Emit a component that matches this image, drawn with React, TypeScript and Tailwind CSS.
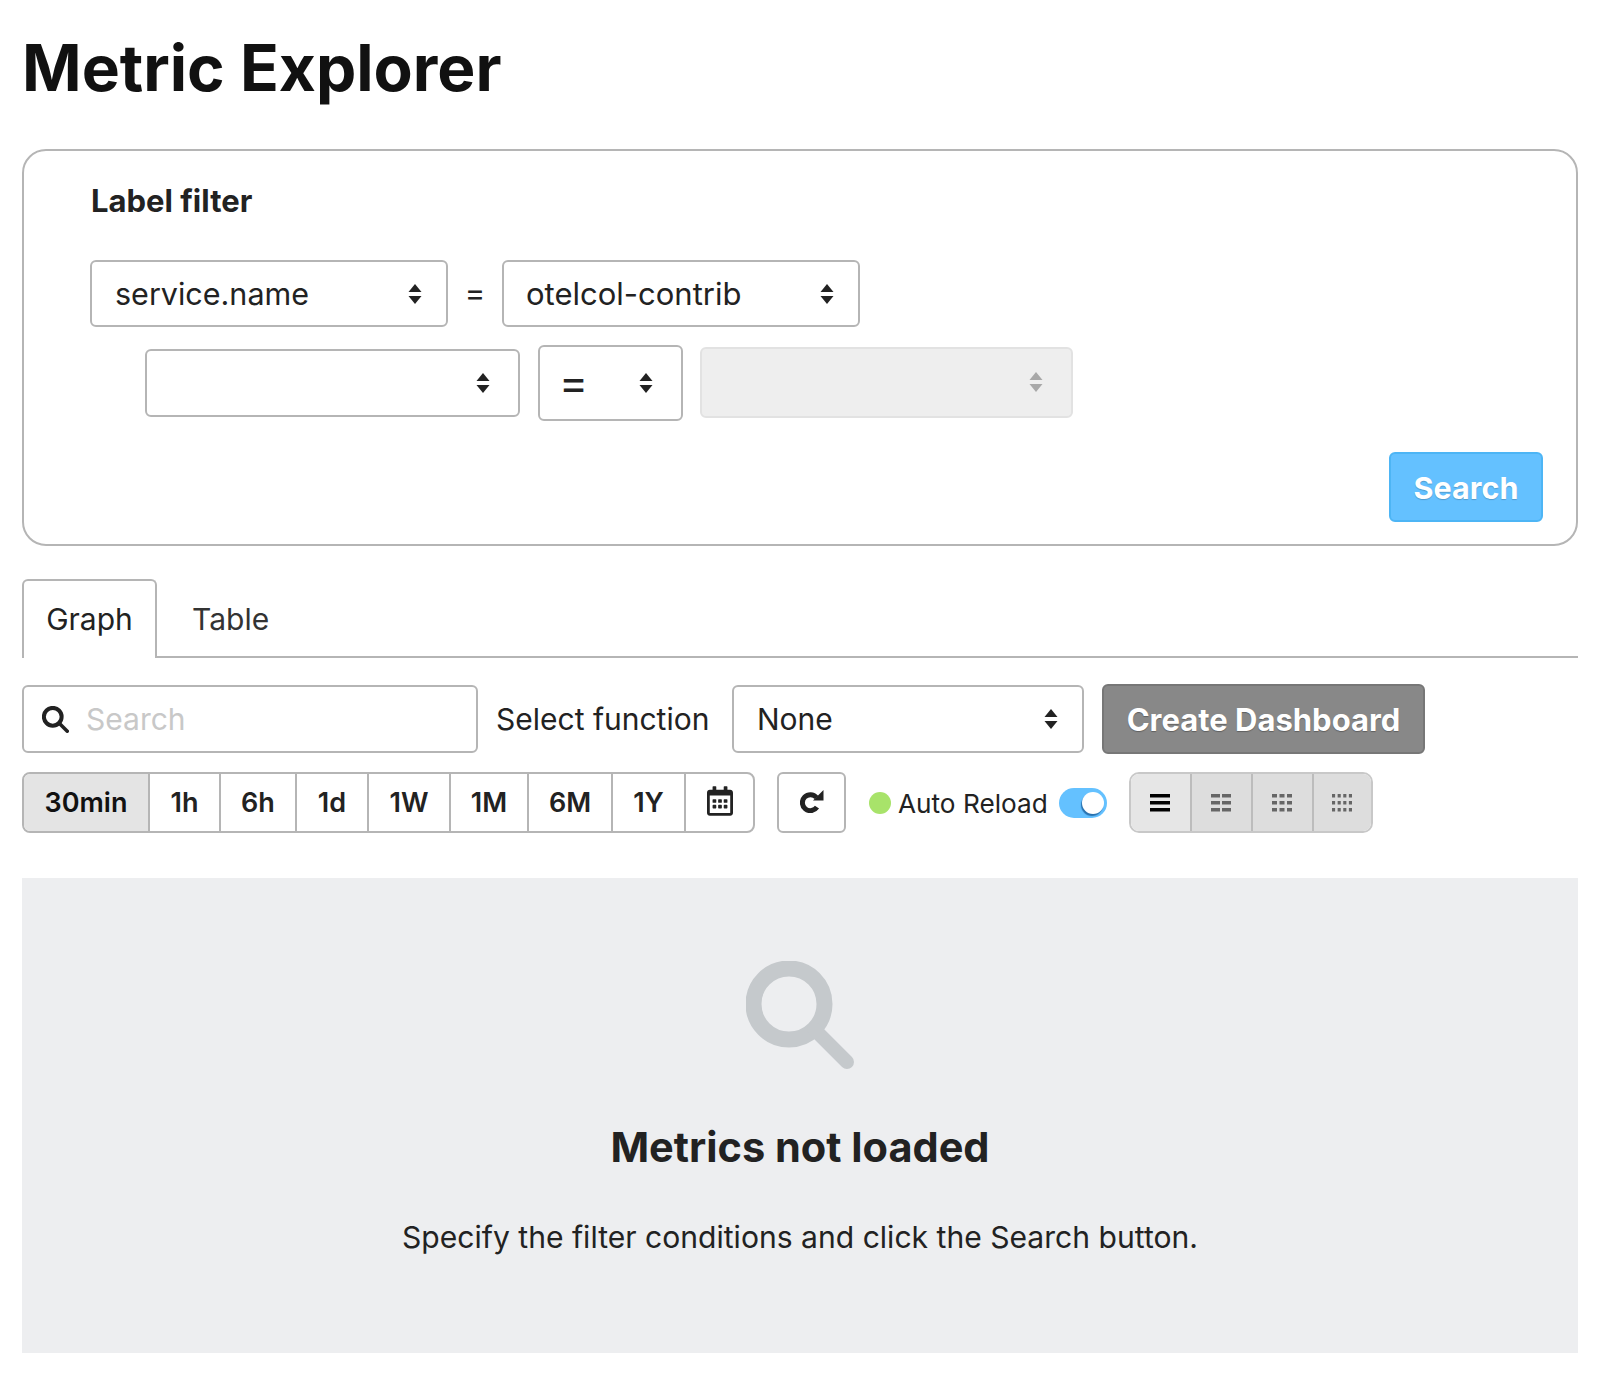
import React from 'react';
import { FaRegCalendarAlt } from 'react-icons/fa';

const RANGES = [
  { label: '30min', w: 'w-[126px]', active: true },
  { label: '1h', w: 'w-[71px]' },
  { label: '6h', w: 'w-[76px]' },
  { label: '1d', w: 'w-[72px]' },
  { label: '1W', w: 'w-[82px]' },
  { label: '1M', w: 'w-[78px]' },
  { label: '6M', w: 'w-[84px]' },
  { label: '1Y', w: 'w-[73px]' },
];

const Arrows: React.FC<{ muted?: boolean }> = ({ muted }) => (
  <svg width="14" height="20" viewBox="0 0 14 20" className={muted ? 'text-[#a8a8a8]' : 'text-[#222222]'}>
    <path d="M7 0 L13.5 8 L0.5 8 Z" fill="currentColor" />
    <path d="M7 20 L13.5 12 L0.5 12 Z" fill="currentColor" />
  </svg>
);

const SearchGlyph: React.FC<{ className: string }> = ({ className }) => (
  <svg viewBox="0 0 108 108" className={className} fill="none" stroke="currentColor">
    <circle cx="43" cy="43" r="35.5" strokeWidth="16" />
    <path d="M68 68 L101 101" strokeWidth="14" strokeLinecap="round" />
  </svg>
);

const ReloadGlyph: React.FC = () => (
  <svg width="24" height="24" viewBox="0 0 24 24" fill="none" className="mb-[3px]">
    <path d="M16.5 8.5 A8 8 0 1 0 17 18.2" stroke="#222222" strokeWidth="5" />
    <path d="M23.5 1 V11.5 H13 Z" fill="#222222" />
  </svg>
);

const SelectBox: React.FC<{ value?: string; className: string; muted?: boolean; valueClass?: string }> = ({
  value,
  className,
  muted,
  valueClass = 'text-[30.5px] pt-[1px]',
}) => (
  <div className={`flex items-center justify-between border-2 rounded-[6px] pl-[23px] text-[#222222] ${muted ? 'bg-[#eeeeee] border-[#e2e2e2]' : 'bg-white border-[#b5b5b5]'} ${className}`}>
    <span className={valueClass}>{value}</span>
    <Arrows muted={muted} />
  </div>
);

const GridIcon: React.FC<{ cols: number; active?: boolean }> = ({ cols, active }) => {
  const gap = cols === 1 ? 0 : cols === 2 ? 2 : 2.5;
  const w = (20 - gap * (cols - 1)) / cols;
  return (
    <svg width="20" height="18" viewBox="0 0 20 18" className={`mr-[2px] ${active ? 'text-black' : 'text-[#666666]'}`}>
      {[0, 7, 14].map((y) =>
        Array.from({ length: cols }).map((_, i) => (
          <rect key={`${y}-${i}`} x={i * (w + gap)} y={y} width={w} height={3.5} fill="currentColor" />
        )),
      )}
    </svg>
  );
};

const App: React.FC = () => {
  return (
    <div className="w-[1602px] h-[1376px] bg-white pl-[22px] pr-[24px] text-[#222222] font-['Inter',sans-serif]">
      <h1 className="pt-[28px] h-[149px] text-[64px] leading-[80px] font-bold text-[#111111]">Metric Explorer</h1>

      <div className="h-[397px] border-2 border-[#b5b5b5] rounded-[24px] pl-[66px] pr-[33px] pt-[28px]">
        <h2 className="pl-[1px] text-[31px] leading-[44px] font-bold">Label filter</h2>
        <div className="flex items-center mt-[37px]">
          <SelectBox value="service.name" className="w-[358px] h-[67px] pr-[24px]" />
          <span className="w-[54px] text-center text-[31px]">=</span>
          <SelectBox value="otelcol-contrib" valueClass="text-[31px] pt-[1px] -ml-[1px]" className="w-[358px] h-[67px] pr-[24px]" />
        </div>
        <div className="flex items-center gap-[18px] mt-[18px] ml-[55px]">
          <SelectBox className="w-[375px] h-[68px] pr-[28px]" />
          <SelectBox value="=" valueClass="text-[44px] leading-none pb-[2px] -ml-[4px]" className="w-[145px] h-[76px] pr-[28px]" />
          <SelectBox muted className="w-[373px] h-[71px] mb-[2px] -ml-[1px] pr-[28px]" />
        </div>
        <div className="flex justify-end mt-[31px]">
          <button className="w-[154px] h-[70px] pt-[2px] rounded-[6px] border-2 border-[#4db5f5] bg-[#64c1ff] text-white text-[30.5px] font-bold [text-shadow:0_1px_1px_rgba(0,0,0,0.2)]">Search</button>
        </div>
      </div>

      <div className="flex mt-[33px] h-[79px] border-b-2 border-[#b5b5b5]">
        <div className="w-[135px] h-[79px] flex items-center justify-center border-2 border-b-0 border-[#b5b5b5] rounded-t-[6px] bg-white text-[30px]">Graph</div>
        <div className="pl-[35px] pt-[4px] flex items-center text-[30px] text-[#333333]">Table</div>
      </div>

      <div className="flex items-center mt-[26px] h-[70px]">
        <div className="w-[456px] h-[68px] flex items-center border-2 border-[#b5b5b5] rounded-[6px] pl-[18px]">
          <SearchGlyph className="w-[27px] h-[27px] text-[#222222]" />
          <span className="ml-[17px] text-[30px] text-[#c8c8c8]">Search</span>
        </div>
        <span className="ml-[18px] w-[236px] text-[30px]">Select function</span>
        <SelectBox value="None" valueClass="text-[30px]" className="w-[352px] h-[68px] pr-[24px]" />
        <button className="ml-[18px] w-[323px] h-[70px] pt-[2px] rounded-[6px] border-2 border-[#777777] bg-[#888888] text-white text-[31px] font-bold [text-shadow:0_1px_1px_rgba(0,0,0,0.3)]">Create Dashboard</button>
      </div>

      <div className="flex items-center mt-[18px] h-[61px]">
        <div className="flex h-[61px] border-2 border-[#b5b5b5] rounded-[8px] overflow-hidden">
          {RANGES.map((r) => (
            <div key={r.label} className={`${r.w} pt-[1px] flex items-center justify-center border-r-2 border-[#b5b5b5] text-[27px] font-semibold ${r.active ? 'bg-[#e4e4e4] text-[#111111]' : 'bg-white'}`}>{r.label}</div>
          ))}
          <div className="w-[67px] pb-[3px] flex items-center justify-center">
            <FaRegCalendarAlt className="w-[26px] h-[30px]" />
          </div>
        </div>
        <div className="ml-[22px] w-[69px] h-[61px] flex items-center justify-center border-2 border-[#b5b5b5] rounded-[6px]">
          <ReloadGlyph />
        </div>
        <span className="ml-[23px] w-[22px] h-[22px] rounded-full bg-[#a8e36a]" />
        <span className="ml-[7px] w-[161px] pt-[2px] whitespace-nowrap text-[26.2px]">Auto Reload</span>
        <div className="w-[48px] h-[30px] rounded-full bg-[#64c1ff] flex items-center justify-end pr-[3px]">
          <span className="w-[22px] h-[22px] rounded-full bg-white shadow-[-1px_2px_1px_rgba(0,60,120,0.6)]" />
        </div>
        <div className="ml-[22px] flex h-[61px] border-2 border-[#c8c8c8] rounded-[10px] overflow-hidden">
          {[1, 2, 3, 4].map((c) => (
            <div key={c} className={`w-[61px] last:w-[57px] flex items-center justify-center border-r-2 last:border-r-0 border-[#bcbcbc] ${c === 1 ? 'bg-[#e6e6e6]' : 'bg-[#dddddd]'}`}>
              <GridIcon cols={c} active={c === 1} />
            </div>
          ))}
        </div>
      </div>

      <div className="mt-[45px] h-[475px] bg-[#edeef0] flex flex-col items-center pt-[83px]">
        <SearchGlyph className="w-[108px] h-[108px] text-[#c5c9cc]" />
        <h3 className="mt-[48px] text-[41.5px] leading-[60px] font-bold">Metrics not loaded</h3>
        <p className="mt-[38px] text-[30.1px] leading-[44px]">Specify the filter conditions and click the Search button.</p>
      </div>
    </div>
  );
};

export default App;
